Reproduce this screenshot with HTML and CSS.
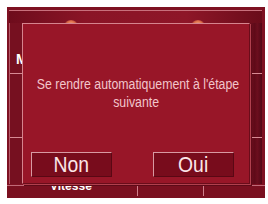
FILE: index.html
```html
<!DOCTYPE html>
<html>
<head>
<meta charset="utf-8">
<link rel="stylesheet" href="styles.css">
</head>
<body>
<div class="panel">
  <div class="topbar">
    <span class="glow glow-a"></span>
    <span class="glow glow-b"></span>
  </div>
  <div class="leftcol">
    <div class="cell first"><span class="letter">M</span></div>
    <div class="cell"></div>
    <div class="cell last"></div>
  </div>
  <div class="middle"></div>
  <div class="rightcol">
    <div class="cell first"></div>
    <div class="cell"></div>
    <div class="cell last"></div>
  </div>
  <div class="bottombar">
    <span class="seg seg1"><span class="speed">Vitesse</span></span>
    <span class="seg seg2"></span>
    <span class="seg seg3"></span>
  </div>

  <div class="dialog">
    <p class="msg"><span class="narrow">Se rendre automatiquement à l'étape</span><br><span class="narrow">suivante</span></p>
    <div class="buttons">
      <div class="btn"><span class="narrow">Non</span></div>
      <div class="btn"><span class="narrow">Oui</span></div>
    </div>
  </div>
</div>
</body>
</html>
```
FILE: styles.css
```css
html, body {
  margin: 0;
  padding: 0;
  background: #ffffff;
}
body {
  width: 268px;
  height: 204px;
  padding: 7px 0 0 7px;
  box-sizing: border-box;
  font-family: "Liberation Sans", Arial, sans-serif;
}
.panel {
  position: relative;
  width: 258px;
  height: 191px;
  background: #7e1122;
  display: grid;
  grid-template-columns: 15px 1fr 15px;
  grid-template-rows: 16px 161px 14px;
  overflow: hidden;
}
.topbar {
  grid-column: 1 / 4;
  position: relative;
  background: linear-gradient(90deg, #6e0c1c 0%, #8a1426 30%, #8e1628 70%, #6a0c1a 100%);
  border-top: 1px solid #c8707c;
  margin-top: 3px;
  margin-left: 2px;
  margin-right: 3px;
}
.glow {
  position: absolute;
  top: 9px;
  width: 14px;
  height: 12px;
  border-radius: 50%;
  background: radial-gradient(circle at 50% 45%, #f6b89a 0%, #e0704a 45%, rgba(160,40,40,0) 80%);
}
.glow-a { left: 55px; }
.glow-b { left: 182px; }
.leftcol, .rightcol {
  display: flex;
  flex-direction: column;
  background: #761020;
  min-height: 0;
  overflow: hidden;
}
.leftcol {
  border-left: 1px solid #b45a68;
  margin-left: 2px;
}
.rightcol {
  background: linear-gradient(90deg, #6e0e1e 0%, #5e0a18 40%, #6c0e1e 60%, #520816 100%);
  margin-right: 3px;
}
.cell {
  height: 63px;
  border-top: 1px solid #d88a94;
  position: relative;
  flex: none;
}
.cell.first {
  height: 50px;
  border-top: none;
}
.cell.last {
  flex: 1;
  height: auto;
}
.letter {
  position: absolute;
  left: 6px;
  top: 28px;
  color: #ffffff;
  font-weight: bold;
  font-size: 14px;
}
.middle {
  background: #8e1426;
}
.bottombar {
  grid-column: 1 / 4;
  display: flex;
  background: #7a1020;
  border-top: 1px solid #c06a78;
  margin-top: 1px;
}
.seg {
  height: 10px;
  border-right: 1px solid #d0808c;
  position: relative;
}
.seg1 { width: 130px; }
.seg2 { width: 65px; }
.seg3 { flex: 1; border-right: none; }
.speed {
  position: absolute;
  left: 43px;
  top: -7px;
  color: #ffffff;
  font-weight: bold;
  font-size: 12px;
}
.dialog {
  position: absolute;
  left: 15px;
  top: 16px;
  width: 228px;
  height: 161px;
  box-sizing: border-box;
  background: #981628;
  border-top: 1px solid #d6848e;
  border-left: 1px solid #d6848e;
  border-right: 1px solid #6a0c1a;
  border-bottom: 1px solid #6a0c1a;
  box-shadow: 1px 1px 0 #b0404e, 2px 2px 0 #5e0a18;
  display: flex;
  flex-direction: column;
}
.narrow {
  display: inline-block;
  transform: scaleX(0.88);
  transform-origin: 50% 50%;
  white-space: nowrap;
}
.msg {
  margin: 51px 0 0 0;
  text-align: center;
  color: #f2c6cc;
  font-size: 14px;
  line-height: 18px;
}
.buttons {
  margin-top: auto;
  display: flex;
  justify-content: space-between;
  padding: 0 15px 6px 8px;
}
.btn {
  width: 81px;
  height: 25px;
  box-sizing: border-box;
  background: #780c1c;
  border-top: 1px solid #d89aa2;
  border-left: 1px solid #d89aa2;
  border-right: 1px solid #5a0814;
  border-bottom: 1px solid #5a0814;
  color: #fbe6e8;
  font-size: 22px;
  line-height: 23px;
  text-align: center;
}
```
